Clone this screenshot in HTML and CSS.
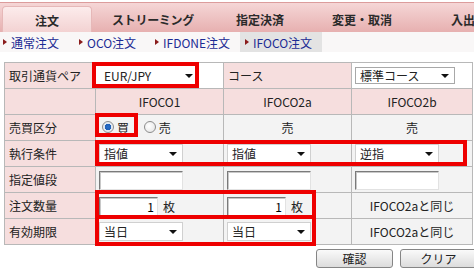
FILE: index.html
```html
<!DOCTYPE html>
<html>
<head>
  <meta charset="UTF-8">
  <meta name="viewport" content="width=device-width, initial-scale=1.0">
  <title>IFOCO注文</title>
  <link rel="stylesheet" href="styles.css">
</head>
<body>
  <div class="tabs">
    <div class="tab active">注文</div>
    <div class="tab t2">ストリーミング</div>
    <div class="tab t3">指定決済</div>
    <div class="tab t4">変更・取消</div>
    <div class="tab t5">入出</div>
  </div>

  <div class="subnav">
    <a class="sub s1" href="#">通常注文</a>
    <a class="sub s2" href="#">OCO注文</a>
    <a class="sub s3" href="#">IFDONE注文</a>
    <a class="sub s4 current" href="#">IFOCO注文</a>
  </div>

  <div class="form-wrap">
    <table class="order">
      <colgroup>
        <col class="c1"><col class="c2"><col class="c3"><col class="c4">
      </colgroup>
      <tr>
        <th>取引通貨ペア</th>
        <td class="white"><div class="sel sel-pair"><span>EUR/JPY</span><i class="arrow"></i></div></td>
        <th>コース</th>
        <td class="white"><div class="sel sel-course"><span>標準コース</span><i class="arrow"></i></div></td>
      </tr>
      <tr class="head">
        <th></th>
        <td>IFOCO1</td>
        <td>IFOCO2a</td>
        <td>IFOCO2b</td>
      </tr>
      <tr>
        <th>売買区分</th>
        <td class="left">
          <label class="radio checked"><i></i>買</label>
          <label class="radio"><i></i>売</label>
        </td>
        <td>売</td>
        <td>売</td>
      </tr>
      <tr>
        <th>執行条件</th>
        <td class="left"><div class="sel sel-cond"><span>指値</span><i class="arrow"></i></div></td>
        <td class="left"><div class="sel sel-cond"><span>指値</span><i class="arrow"></i></div></td>
        <td class="left"><div class="sel sel-cond"><span>逆指</span><i class="arrow"></i></div></td>
      </tr>
      <tr>
        <th>指定値段</th>
        <td class="left"><input class="price" type="text"></td>
        <td class="left"><input class="price" type="text"></td>
        <td class="left"><input class="price" type="text"></td>
      </tr>
      <tr>
        <th>注文数量</th>
        <td class="left"><input class="qty" type="text" value="1"><span class="unit">枚</span></td>
        <td class="left"><input class="qty" type="text" value="1"><span class="unit">枚</span></td>
        <td>IFOCO2aと同じ</td>
      </tr>
      <tr>
        <th>有効期限</th>
        <td class="left"><div class="sel sel-cond"><span>当日</span><i class="arrow"></i></div></td>
        <td class="left"><div class="sel sel-cond"><span>当日</span><i class="arrow"></i></div></td>
        <td>IFOCO2aと同じ</td>
      </tr>
    </table>

    <!-- red highlight marks -->
    <div class="mark m-pair"></div>
    <div class="mark m-side"></div>
    <div class="mark m-cond"></div>
    <div class="mark m-qty"></div>
    <div class="mark m-term"></div>
  </div>

  <div class="buttons">
    <button class="btn">確認</button>
    <button class="btn">クリア</button>
  </div>
</body>
</html>
```

FILE: styles.css
```css
body {
  margin: 0;
  width: 474px;
  height: 272px;
  overflow: hidden;
  background: #fff;
  font-family: "Noto Sans CJK JP", "DejaVu Sans", sans-serif;
  font-size: 12px;
  color: #222;
}
.tabs {
  display: flex;
  height: 29px;
  margin-top: 2px;
  padding-left: 2px;
  border-top: 1px solid #dc9c9c;
  background: linear-gradient(#f5d6d6, #e7b0b0);
}
.tab {
  flex: none;
  display: flex;
  align-items: center;
  justify-content: center;
  font-weight: bold;
  font-size: 12px;
  color: #2a2a2a;
  padding-top: 4px;
  box-sizing: border-box;
  white-space: nowrap;
}
.tab.active {
  width: 90px;
  margin-top: 3px;
  padding-top: 1px;
  background: linear-gradient(#fcecec, #f3d2d2);
  border: 1px solid #e6b8b8;
  border-bottom: 0;
  border-radius: 4px 4px 0 0;
}
.t2 { width: 122px; letter-spacing: -0.3px; }
.t3 { width: 92px; }
.t4 { width: 112px; }
.t5 { width: 58px; justify-content: flex-start; padding-left: 33px; }
.subnav {
  display: flex;
  height: 20px;
  background: #f9f7f7;
}
.sub {
  flex: none;
  display: flex;
  align-items: center;
  color: #1c2b94;
  text-decoration: none;
  font-size: 12px;
}
.sub::before {
  content: "";
  border-left: 4px solid #8a1c1c;
  border-top: 3px solid transparent;
  border-bottom: 3px solid transparent;
  margin-right: 4px;
}
.s1 { padding-left: 3px; width: 74px; }
.s2 { padding-left: 2px; width: 74px; }
.s3 { padding-left: 2px; width: 81px; }
.s4 {
  margin-left: 4px;
  padding: 0 10px 0 5px;
  background: #e3e3e3;
}
.form-wrap {
  position: relative;
  margin: 10px 0 0 4px;
  width: 468px;
}
.order {
  table-layout: fixed;
  width: 468px;
  border-collapse: collapse;
}
.c1 { width: 91px; }
.c2 { width: 128px; }
.c3 { width: 128px; }
.c4 { width: 121px; }
.order tr { height: 26px; }
.order th,
.order td {
  border: 1px solid #b8b8b8;
  padding: 0 3px;
  font-weight: normal;
  white-space: nowrap;
}
.order th {
  background: #f6dede;
  text-align: left;
  padding-left: 4px;
}
.order td {
  background: #f3f3f3;
  text-align: center;
}
.order td.left { text-align: left; }
.order td.white { background: #fff; text-align: left; }
.order tr.head td { background: #f6dede; }
.sel {
  display: flex;
  align-items: center;
  justify-content: space-between;
  box-sizing: border-box;
  height: 19px;
  padding: 0 5px 0 4px;
  background: #fff;
  border: 1px solid #d0d0d0;
}
.sel-pair { width: 99px; border: 0; padding-left: 5px; }
.sel-course { width: 100px; height: 17px; border-color: #a8a8a8; }
.sel-cond { width: 84px; }
.arrow {
  width: 0;
  height: 0;
  border-left: 4px solid transparent;
  border-right: 4px solid transparent;
  border-top: 4px solid #111;
}
.radio {
  display: inline-flex;
  align-items: center;
  margin-left: 3px;
  margin-right: 9px;
}
.radio i {
  display: inline-block;
  width: 10px;
  height: 10px;
  border-radius: 50%;
  border: 1px solid #8c8c8c;
  background: radial-gradient(circle at 40% 40%, #fff, #e2e2e2);
  margin-right: 3px;
}
.radio.checked i {
  background: radial-gradient(circle, #2a6fc8 0, #1f5fb8 3px, #dfe8f2 3.5px, #f4f4f4 100%);
}
input {
  font-family: inherit;
  font-size: 12px;
  box-sizing: border-box;
  height: 19px;
  margin: 0;
  padding: 0 3px;
  background: #fff;
  border: 1px solid;
  border-color: #7a7a7a #e2e2e2 #e2e2e2 #7a7a7a;
  box-shadow: inset 1px 1px 0 #c8c8c8;
  vertical-align: middle;
}
.price { width: 84px; }
.qty { width: 59px; text-align: right; }
.unit { margin-left: 5px; vertical-align: middle; }
.mark {
  position: absolute;
  box-sizing: border-box;
  border: 4px solid #ee0000;
}
.m-pair { left: 88px; top: 0; width: 107px; height: 26px; }
.m-side { left: 91px; top: 51px; width: 43px; height: 24px; }
.m-cond { left: 91px; top: 78px; width: 372px; height: 26px; }
.m-qty { left: 91px; top: 128px; width: 221px; height: 29px; }
.m-term { left: 91px; top: 153px; width: 221px; height: 31px; }
.buttons {
  display: flex;
  gap: 7px;
  padding-left: 316px;
  margin-top: 4px;
}
.btn {
  flex: none;
  width: 77px;
  height: 19px;
  padding: 0;
  font-family: inherit;
  font-size: 12px;
  color: #222;
  background: linear-gradient(#fafafa, #dcdcdc);
  border: 1px solid #858585;
  border-radius: 3px;
}
```
